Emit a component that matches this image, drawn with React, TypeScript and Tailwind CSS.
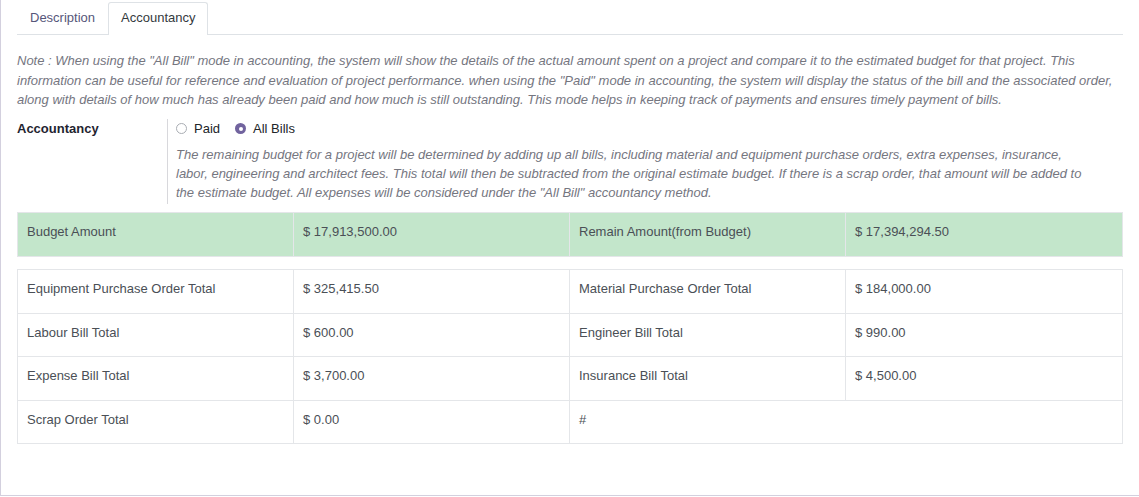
import React from "react";

const rows: [string, string, string, string][] = [
  ["Equipment Purchase Order Total", "$ 325,415.50", "Material Purchase Order Total", "$ 184,000.00"],
  ["Labour Bill Total", "$ 600.00", "Engineer Bill Total", "$ 990.00"],
  ["Expense Bill Total", "$ 3,700.00", "Insurance Bill Total", "$ 4,500.00"],
];

function Cell({ children, last, span }: { children?: React.ReactNode; last?: boolean; span?: boolean }) {
  return (
    <div className={`flex items-center pl-[9px] pb-[4px] ${span ? "col-span-2" : ""} ${last ? "" : "border-r border-[#e4e6e9]"}`}>
      {children}
    </div>
  );
}

export default function App() {
  return (
    <div className="w-[1139px] h-[496px] bg-white border-l border-b border-[#d3d0de] font-['Liberation_Sans',Arial,sans-serif] text-[#4a4f56] text-[13px]">
      <div className="pl-[16px] pr-[16px] pt-[2px]">
        {/* Tabs */}
        <div className="flex h-[33px] border-b border-[#dee2e6]">
          <div className="h-[33px] px-[13px] pb-[2px] flex items-center text-[#56567a] text-[13px]">Description</div>
          <div className="h-[33px] px-[12px] pb-[2px] flex items-center text-[#343a40] text-[13px] border border-b-0 border-[#dee2e6] rounded-t-[3px] bg-white -mb-px">
            Accountancy
          </div>
        </div>

        {/* Note */}
        <p className="mt-[16px] italic text-[#75767f] text-[13px] leading-[19.6px]">
          Note : When using the "All Bill" mode in accounting, the system will show the details of the actual amount spent on a project and compare it to the estimated budget for that project. This
          <br />
          information can be useful for reference and evaluation of project performance. when using the "Paid" mode in accounting, the system will display the status of the bill and the associated order,
          <br />
          along with details of how much has already been paid and how much is still outstanding. This mode helps in keeping track of payments and ensures timely payment of bills.
        </p>

        {/* Accountancy field */}
        <div className="flex mt-[9px]">
          <div className="w-[150px] pt-[1px] font-bold text-[#1f2430] text-[13px] leading-[18px]">Accountancy</div>
          <div className="border-l border-[#d8d8dc] pl-[8px] pb-[1px]">
            <div className="flex items-center h-[18px] text-[13px] text-[#212529] mt-[1px]">
              <span className="w-[11px] h-[11px] rounded-full border border-[#a9adb3] bg-white"></span>
              <span className="ml-[7px]">Paid</span>
              <span className="ml-[15px] w-[11px] h-[11px] rounded-full bg-[#71639e] flex items-center justify-center">
                <span className="w-[4px] h-[4px] rounded-full bg-white"></span>
              </span>
              <span className="ml-[7px]">All Bills</span>
            </div>
            <p className="mt-[7px] italic text-[#75767f] text-[13px] leading-[19.3px]">
              The remaining budget for a project will be determined by adding up all bills, including material and equipment purchase orders, extra expenses, insurance,
              <br />
              labor, engineering and architect fees. This total will then be subtracted from the original estimate budget. If there is a scrap order, that amount will be added to
              <br />
              the estimate budget. All expenses will be considered under the "All Bill" accountancy method.
            </p>
          </div>
        </div>

        {/* Budget table */}
        <div className="mt-[8px] w-[1106px] grid grid-cols-4 h-[45px] bg-[#c3e6cb] border border-[#e4e6e9]">
          <Cell>Budget Amount</Cell>
          <Cell>$ 17,913,500.00</Cell>
          <Cell>Remain Amount(from Budget)</Cell>
          <Cell last>$ 17,394,294.50</Cell>
        </div>

        {/* Totals table */}
        <div className="mt-[12px] w-[1106px] border border-[#e4e6e9] border-b-0">
          {rows.map((r, i) => (
            <div key={i} className={`grid grid-cols-4 border-b border-[#e4e6e9] ${i % 2 === 0 ? "h-[44px]" : "h-[43px]"}`}>
              <Cell>{r[0]}</Cell>
              <Cell>{r[1]}</Cell>
              <Cell>{r[2]}</Cell>
              <Cell last>{r[3]}</Cell>
            </div>
          ))}
          <div className="grid grid-cols-4 border-b border-[#e4e6e9] h-[43px]">
            <Cell>Scrap Order Total</Cell>
            <Cell>$ 0.00</Cell>
            <Cell last span>#</Cell>
          </div>
        </div>
      </div>
    </div>
  );
}
